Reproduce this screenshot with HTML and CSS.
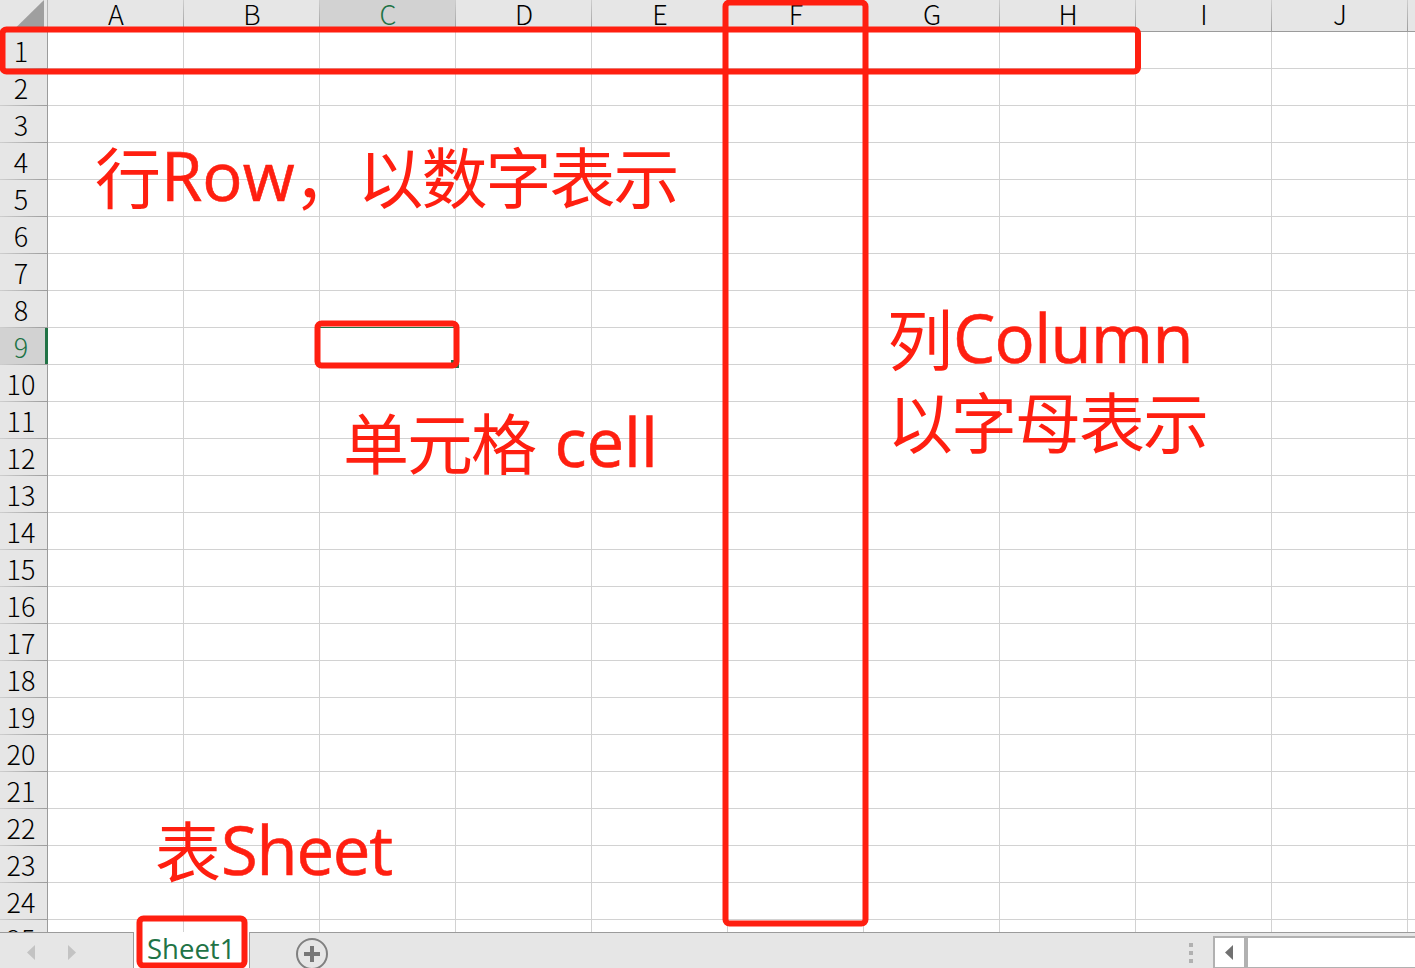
FILE: index.html
```html
<!DOCTYPE html>
<html lang="zh-CN">
<head>
<meta charset="utf-8">
<title>Sheet1</title>
<link rel="stylesheet" href="styles.css">
</head>
<body>
<div class="app">
  <div class="columns">
    <div class="corner"><svg width="47" height="31" viewBox="0 0 47 31"><path d="M44 0V27H16.500Z" fill="#9f9f9f"/></svg></div>
    <div class="col">A</div><div class="col">B</div><div class="col active">C</div><div class="col">D</div><div class="col">E</div><div class="col">F</div><div class="col">G</div><div class="col">H</div><div class="col">I</div><div class="col">J</div><div class="col"></div>
  </div>
  <div class="body">
    <div class="rows">
      <div class="row">1</div><div class="row">2</div><div class="row">3</div><div class="row">4</div><div class="row">5</div><div class="row">6</div><div class="row">7</div><div class="row">8</div><div class="row active">9</div><div class="row">10</div><div class="row">11</div><div class="row">12</div><div class="row">13</div><div class="row">14</div><div class="row">15</div><div class="row">16</div><div class="row">17</div><div class="row">18</div><div class="row">19</div><div class="row">20</div><div class="row">21</div><div class="row">22</div><div class="row">23</div><div class="row">24</div><div class="row">25</div>
    </div>
    <div class="cells"></div>
  </div>
  <div class="footer">
    <div class="nav">
      <svg width="133" height="35" viewBox="0 0 133 35"><path d="M35 12V27L27 19.500ZM68 12V27L76 19.500Z" fill="#c3c3c3"/></svg>
    </div>
    <div class="tab">Sheet1</div>
    <div class="add">
      <svg width="34" height="35" viewBox="0 0 34 35"><circle cx="17" cy="21" r="15" fill="none" stroke="#808080" stroke-width="2"/><path d="M9 21H25M17 13V29" stroke="#777" stroke-width="4"/></svg>
    </div>
    <div class="grip"><i></i><i></i><i></i></div>
    <div class="scroll">
      <div class="arrow"><svg width="29" height="29" viewBox="0 0 29 29"><path d="M18 7V22L10 14.500Z" fill="#717171"/></svg></div>
      <div class="track"></div>
    </div>
  </div>

  <svg class="marks" width="1415" height="968" viewBox="0 0 1415 968">
    <path d="M320 327.500H455" stroke="#217346"/>
    <path d="M451 360H459V368H451Z" fill="#217346"/>
    <g fill="none" stroke="#ff1f10" stroke-width="6">
      <rect x="2.500" y="29.500" width="1135.500" height="42" rx="4"/>
      <rect x="725.500" y="2.500" width="140" height="921" rx="4"/>
      <rect x="317.500" y="323.500" width="139" height="42" rx="4"/>
      <rect x="139.500" y="918.500" width="105" height="47" rx="4"/>
    </g>
  </svg>
  <div class="note note-row">行<span class="latin">Row</span>，以数字表示</div>
  <div class="note note-column">列<span class="latin">Column</span><br>以字母表示</div>
  <div class="note note-cell">单元格<span class="latin"> cell</span></div>
  <div class="note note-sheet">表<span class="latin">Sheet</span></div>
</div>
</body>
</html>
```
FILE: styles.css
```css
* { box-sizing: border-box; }
body { margin: 0; background: #fff; }
svg { display: block; }
.app {
  position: relative;
  width: 1415px;
  height: 968px;
  overflow: hidden;
  display: flex;
  flex-direction: column;
  font-family: "Noto Sans CJK SC", sans-serif;
  font-weight: 300;
  color: #000;
}
.columns {
  display: flex;
  height: 32px;
  flex: none;
  background: #e6e6e6;
  border-bottom: 1px solid #9b9b9b;
}
.corner { width: 48px; flex: none; border-right: 1px solid #b4b4b4; }
.col {
  width: 136px;
  flex: none;
  padding-left: 1px;
  border-right: 1px solid;
  border-image: linear-gradient(#cfcfcf, #9b9b9b) 1;
  text-align: center;
  font-size: 27px;
  line-height: 28px;
}
.col.active { background: #d2d2d2; color: #217346; }
.body { display: flex; height: 900px; flex: none; overflow: hidden; }
.rows { width: 48px; flex: none; background: #e6e6e6; border-right: 1px solid #9b9b9b; }
.row {
  height: 37px;
  padding-right: 5px;
  border-bottom: 1px solid;
  border-image: linear-gradient(90deg, #cfcfcf, #9b9b9b) 1;
  text-align: center;
  font-size: 27px;
  line-height: 38px;
}
.row.active {
  width: 48px;
  padding-right: 6px;
  background: #d2d2d2;
  color: #217346;
  box-shadow: inset -3px 0 #217346;
}
.cells {
  flex: 1;
  background:
    repeating-linear-gradient(90deg, transparent 0 135px, #d2d2d2 135px 136px),
    repeating-linear-gradient(transparent 0 36px, #d2d2d2 36px 37px),
    #fff;
}
.footer {
  display: flex;
  height: 36px;
  flex: none;
  background: #e6e6e6;
  border-top: 1px solid #9b9b9b;
}
.nav { width: 133px; }
.tab {
  width: 117px;
  height: 36px;
  margin-top: -1px;
  background: #fff;
  border: solid #9b9b9b;
  border-width: 0 1px;
  padding-left: 13px;
  font: 27.5px/33px "Open Sans", sans-serif;
  color: #217346;
}
.add { width: 34px; margin-left: 45px; }
.grip { display: flex; flex-direction: column; gap: 4px; margin: 10px 20px 0 auto; }
.grip i { width: 4px; height: 4px; background: #b1b1b1; }
.scroll {
  display: flex;
  width: 202px;
  height: 32px;
  margin-top: 3px;
  background: #fff;
  border: solid #b1b1b1;
  border-width: 2px 0 1px 2px;
}
.arrow { width: 33px; border-right: 4px solid #b1b1b1; }
.marks { position: absolute; left: 0; top: 0; }
.note {
  position: absolute;
  white-space: pre;
  color: #ff1f10;
  font-size: 66px;
  letter-spacing: -2px;
  font-weight: 400;
  line-height: 83px;
}
.latin {
  margin-left: 2px;
  font-family: "Open Sans", sans-serif;
  font-size: 67px;
  letter-spacing: 0;
  line-height: 1px;
  vertical-align: 2.5px;
  -webkit-text-stroke: 0.6px #ff1f10;
}
.note-row { left: 95px; top: 133px; }
.note-row .latin { margin-right: -1px; }
.note-column { left: 887px; top: 295px; }
.note-column .latin { letter-spacing: -0.6px; }
.note-cell { left: 343px; top: 399px; }
.note-sheet { left: 155px; top: 807px; }
.note-sheet .latin { letter-spacing: -1.2px; }
```
